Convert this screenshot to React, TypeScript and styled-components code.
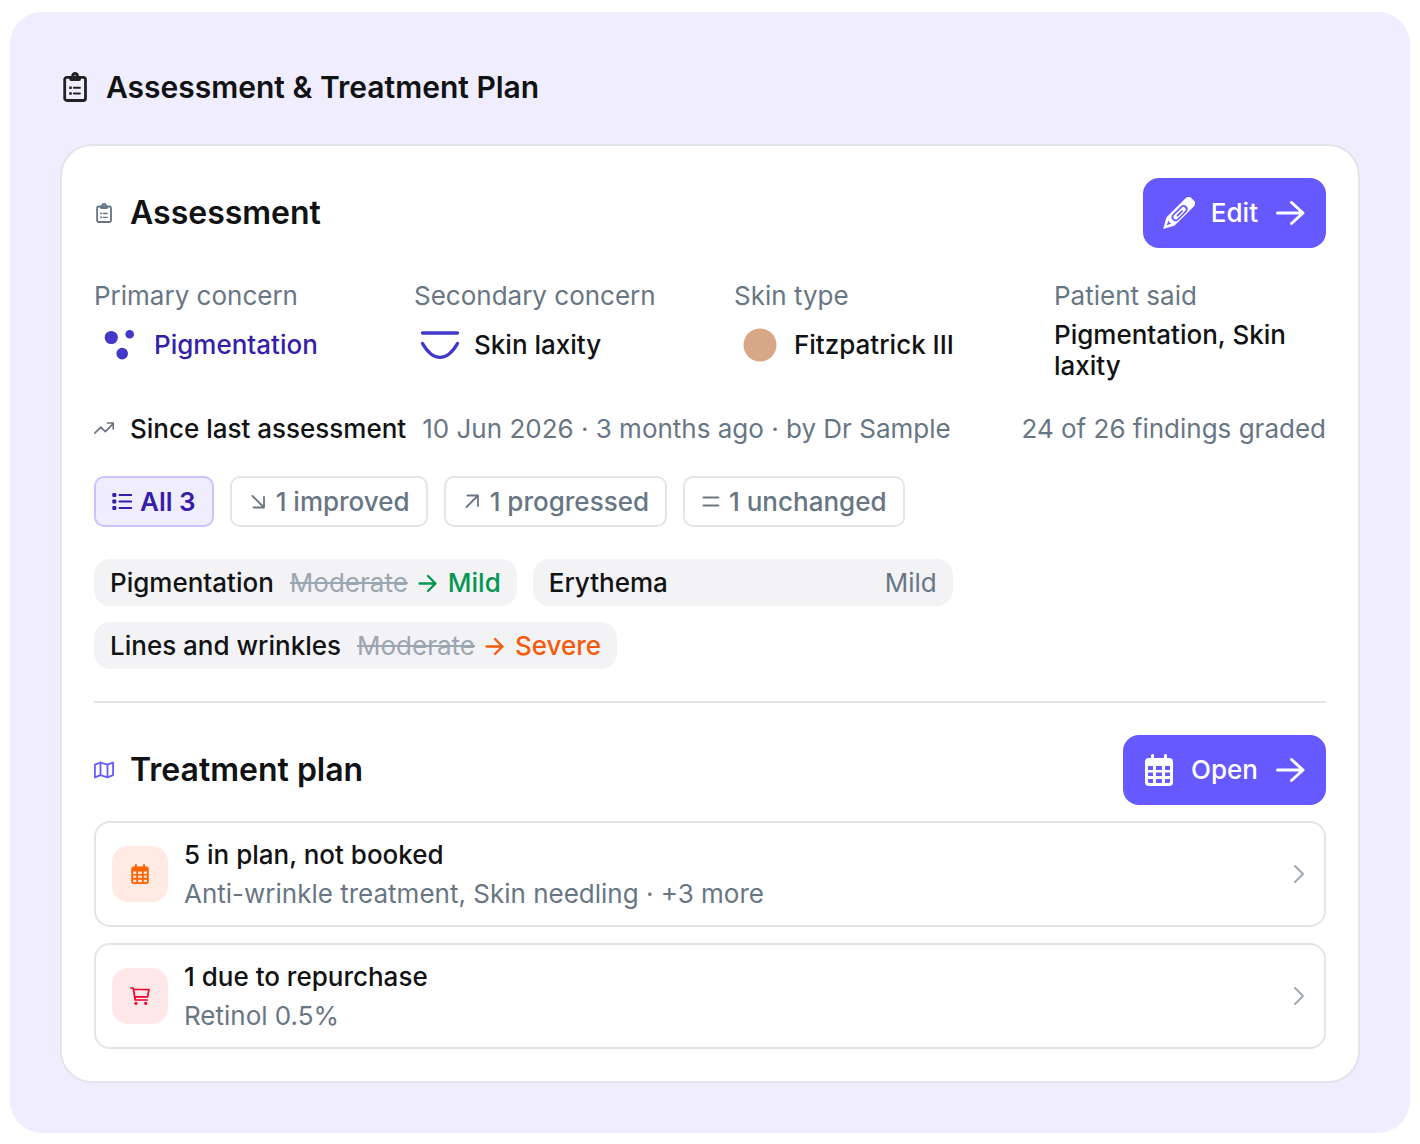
import React from "react";
import styled, { createGlobalStyle } from "styled-components";

const c = {
  panel: "#f0edff",
  primary: "#6559ff",
  text: "#111214",
  muted: "#687684",
  faint: "#9ca6b1",
  border: "#e1e6eb",
  deep: "#351eaa",
  glyph: "#4338ca",
  tag: "#f3f3f6",
  green: "#059652",
  orange: "#f65a0b",
};

const GlobalStyle = createGlobalStyle`
  * { box-sizing: border-box; }
  body {
    margin: 0;
    background: #fff;
    color: ${c.text};
    font: 400 26px/39px Inter, "Liberation Sans", sans-serif;
  }
  h1, h2, h3, p, dl, dd { margin: 0; padding: 0; }
  button { font: inherit; color: inherit; cursor: pointer; }
`;

const Page = styled.main`
  padding: 12px 10px;
`;
const Panel = styled.section`
  padding: 50px;
  border-radius: 32px;
  background: ${c.panel};
`;
const PanelHeader = styled.header`
  display: flex;
  align-items: center;
  gap: 16px;
  height: 50px;
  margin-bottom: 32px;
`;
const PanelTitle = styled.h1`
  font-size: 30px;
  font-weight: 600;
`;
const Card = styled.div`
  padding: 32px;
  border: 2px solid ${c.border};
  border-radius: 32px;
  background: #fff;
`;
const SectionHeader = styled.div`
  display: flex;
  align-items: center;
  justify-content: space-between;
`;
const TitleGroup = styled.div`
  display: flex;
  align-items: center;
  gap: 16px;
`;
const SectionTitle = styled.h2`
  font-size: 32px;
  line-height: 38px;
  font-weight: 600;
`;
const ActionButton = styled.button`
  display: flex;
  align-items: center;
  gap: 16px;
  height: 70px;
  padding: 0 20px;
  border: 0;
  border-radius: 16px;
  background: ${c.primary};
  color: #fff;
  line-height: 38px;
  font-weight: 500;
`;
const Facts = styled.dl`
  display: grid;
  grid-template-columns: repeat(4, 1fr);
  column-gap: 48px;
  margin-top: 28px;
`;
const FactLabel = styled.dt`
  margin-bottom: 4px;
  color: ${c.muted};
`;
const FactValue = styled.dd<{ $color?: string; $multiline?: boolean }>`
  display: flex;
  align-items: center;
  gap: 8px;
  line-height: ${(p) => (p.$multiline ? 31 : 38)}px;
  font-weight: 500;
  color: ${(p) => p.$color ?? c.text};
`;
const Since = styled.div`
  display: flex;
  align-items: center;
  gap: 16px;
  margin-top: 28px;
  color: ${c.muted};
`;
const SinceTitle = styled.h3`
  font-size: 26px;
  font-weight: 500;
  color: ${c.text};
`;
const Graded = styled.p`
  margin-left: auto;
`;
const Wrap = styled.div<{ $top: number }>`
  display: flex;
  flex-wrap: wrap;
  gap: 16px;
  margin-top: ${(p) => p.$top}px;
`;
const Filter = styled.button<{ $active?: boolean }>`
  display: flex;
  align-items: center;
  gap: 8px;
  padding: 4px 16px;
  border: 2px solid ${(p) => (p.$active ? "#cbc3ff" : c.border)};
  border-radius: 10px;
  background: ${(p) => (p.$active ? c.panel : "#fff")};
  color: ${(p) => (p.$active ? c.deep : c.muted)};
  font-weight: ${(p) => (p.$active ? 600 : 500)};
`;
const Finding = styled.div`
  display: flex;
  align-items: center;
  justify-content: space-between;
  gap: 16px;
  min-width: 420px;
  padding: 4px 16px;
  border-radius: 16px;
  background: ${c.tag};
`;
const FindingName = styled.span`
  font-weight: 500;
`;
const Change = styled.span<{ $color: string }>`
  display: flex;
  align-items: center;
  gap: 10px;
  color: ${(p) => p.$color};
`;
const Before = styled.s`
  color: ${c.faint};
`;
const After = styled.span`
  font-weight: 500;
`;
const Rule = styled.hr`
  height: 2px;
  margin: 32px 0;
  border: 0;
  background: ${c.border};
`;
const PlanItem = styled.button`
  display: flex;
  align-items: center;
  gap: 16px;
  width: 100%;
  margin-top: 16px;
  padding: 12px 16px;
  border: 2px solid ${c.border};
  border-radius: 16px;
  background: #fff;
  text-align: left;
`;
const Tile = styled.span<{ $bg: string; $fg: string }>`
  display: flex;
  align-items: center;
  justify-content: center;
  width: 56px;
  height: 56px;
  border-radius: 16px;
  background: ${(p) => p.$bg};
  color: ${(p) => p.$fg};
`;
const ItemText = styled.span`
  flex: 1;
  display: flex;
  flex-direction: column;
`;
const ItemTitle = styled.span`
  font-weight: 500;
`;
const ItemDetail = styled.span`
  color: ${c.muted};
`;
const Svg = styled.svg<{ $size: number; $color?: string }>`
  flex: none;
  display: block;
  width: ${(p) => p.$size}px;
  height: ${(p) => p.$size}px;
  color: ${(p) => p.$color ?? "inherit"};
`;

type IconProps = { size?: number; color?: string };
const line = {
  fill: "none",
  stroke: "currentColor",
  strokeLinecap: "round",
  strokeLinejoin: "round",
} as const;

const Clipboard = ({ size = 20, color }: IconProps) => (
  <Svg $size={size} $color={color} viewBox="0 0 30 30" aria-hidden>
    <rect x="4.7" y="5.3" width="20.8" height="23.2" rx="2.2" {...line} strokeWidth="2.8" />
    <path
      fill="currentColor"
      fillRule="evenodd"
      d="M9.2 4.2h2A4 4 0 0 1 15.1 0a4 4 0 0 1 3.9 4.2h2V7a2 2 0 0 1-2 2h-7.8a2 2 0 0 1-2-2zM15.1 3.2a1.5 1.5 0 1 0 0 3 1.5 1.5 0 0 0 0-3z"
    />
    <path fill="currentColor" d="M9.2 14.4h2.6V17H9.2zM9.2 20.2h2.6v2.6H9.2z" />
    <path d="M13.9 15.7h6M13.9 21.5h6" {...line} strokeWidth="2" />
  </Svg>
);
const Pencil = () => (
  <Svg $size={32} viewBox="0 0 32 32" aria-hidden>
    <path
      fill="currentColor"
      fillRule="evenodd"
      d="M22.6 1.2a4.2 4.2 0 0 1 5.9 0l2.3 2.3a4.2 4.2 0 0 1 0 5.9L12.4 27.8a5 5 0 0 1-2 1.2L.2 32l2.9-10.4a5 5 0 0 1 1.2-2zM5.6 23.4 3.6 28.2l4.8-1.6-1.8-.8z"
    />
    <g {...line}>
      <path d="m12.6 20.2 8-8" stroke={c.primary} strokeWidth="8" />
      <path d="m12.800 20 7.600-7.600" strokeWidth="4.800" />
      <path d="m14.500 18.600 4.700-4.600" stroke={c.primary} strokeWidth="1.600" />
    </g>
  </Svg>
);
const Arrow = () => (
  <Svg $size={32} viewBox="0 0 32 32" aria-hidden>
    <path d="M3.5 16H29M17.5 5.500 29 16 17.500 26.500" {...line} strokeWidth="3" />
  </Svg>
);
const Calendar = ({ size = 32 }: IconProps) => (
  <Svg $size={size} viewBox="0 0 32 32" aria-hidden>
    <path
      fill="currentColor"
      fillRule="evenodd"
      d="M9.500 0A1.500 1.500 0 0 1 11 1.500V4h10V1.500a1.500 1.500 0 0 1 3 0V4h2a4 4 0 0 1 4 4v20a4 4 0 0 1-4 4H6a4 4 0 0 1-4-4V8a4 4 0 0 1 4-4h2V1.500A1.500 1.500 0 0 1 9.500 0zM5 12v4h5v-4zm8 0v4h6v-4zm9 0v4h5v-4zM5 18.500v3.500h5v-3.500zm8 0v3.500h6v-3.500zm9 0v3.500h5v-3.500zM5 25v3l1 1h4v-4zm8 0v4h6v-4zm9 0v4h4l1-1v-3z"
    />
  </Svg>
);
const Spots = () => (
  <Svg $size={52} $color={c.glyph} viewBox="0 0 52 52" aria-hidden>
    <g fill="currentColor">
      <circle cx="17.300" cy="18.500" r="6.600" />
      <circle cx="35.700" cy="15.200" r="4.300" />
      <circle cx="28.200" cy="34.600" r="5.800" />
    </g>
  </Svg>
);
const Laxity = () => (
  <Svg $size={52} $color={c.glyph} viewBox="0 0 52 52" aria-hidden>
    <path d="M8.500 14h35M8.500 24.500C19 43 33 43 43.500 24.500" {...line} strokeWidth="3.400" />
  </Svg>
);
const SkinTone = () => (
  <Svg $size={52} $color="#d6a887" viewBox="0 0 52 52" aria-hidden>
    <circle cx="26" cy="26" r="16.500" fill="currentColor" />
  </Svg>
);
const Trend = () => (
  <Svg $size={20} viewBox="0 0 20 20" aria-hidden>
    <path d="m.8 14.200 6-6 4.500 4.500 7.900-8M13.500 4h5.800v6" {...line} strokeWidth="1.700" />
  </Svg>
);
const List = () => (
  <Svg $size={20} viewBox="0 0 20 20" aria-hidden>
    <g fill="currentColor">
      <rect x="0.300" y="1" width="4" height="4" rx="1" />
      <rect x="0.300" y="7.500" width="4" height="4" rx="1" />
      <rect x="0.300" y="14" width="4" height="4" rx="1" />
    </g>
    <path d="M7.500 3h11.700M7.500 9.500h11.700M7.500 16h11.700" {...line} strokeWidth="2" />
  </Svg>
);
const DownRight = () => (
  <Svg $size={20} viewBox="0 0 20 20" aria-hidden>
    <path d="m4.500 4 11 11M5.500 15.500H16V5" {...line} strokeWidth="1.800" />
  </Svg>
);
const UpRight = () => (
  <Svg $size={20} viewBox="0 0 20 20" aria-hidden>
    <path d="M4.500 15 15.500 4M5.500 3.500H16V14" {...line} strokeWidth="1.800" />
  </Svg>
);
const Equal = () => (
  <Svg $size={20} viewBox="0 0 20 20" aria-hidden>
    <path d="M2.500 5.500h15M2.500 13.500h15" {...line} strokeWidth="1.800" />
  </Svg>
);
const SmallArrow = () => (
  <Svg $size={20} viewBox="0 0 20 20" aria-hidden>
    <path d="M1.500 10.500h16M10 3l7.500 7.500L10 18" {...line} strokeWidth="2.300" />
  </Svg>
);
const MapIcon = () => (
  <Svg $size={20} $color={c.primary} viewBox="0 0 20 20" aria-hidden>
    <path
      d="M.9 4.600 6.500 2.500l7 2.200 5.600-2.200v12.600l-5.600 2.200-7-2.200-5.600 2.200zM6.500 2.500v12.600M13.500 4.700v12.600"
      {...line}
      strokeWidth="1.800"
    />
  </Svg>
);
const Cart = () => (
  <Svg $size={20} viewBox="0 0 20 20" aria-hidden>
    <path d="M.9 2h2.300l2 12h12M3.600 3.500h15.300l-1.300 7.300H4.800" {...line} strokeWidth="1.700" />
    <circle cx="5.900" cy="17.300" r="1.600" fill="currentColor" />
    <circle cx="15.700" cy="17.300" r="1.600" fill="currentColor" />
  </Svg>
);
const Chevron = () => (
  <Svg $size={20} $color={c.faint} viewBox="0 0 20 20" aria-hidden>
    <path d="m7 2 8 8-8 8" {...line} strokeWidth="1.900" />
  </Svg>
);

const filters = [
  { label: "All 3", icon: <List />, active: true },
  { label: "1 improved", icon: <DownRight /> },
  { label: "1 progressed", icon: <UpRight /> },
  { label: "1 unchanged", icon: <Equal /> },
];

const findings = [
  { name: "Pigmentation", before: "Moderate", after: "Mild", color: c.green },
  { name: "Erythema", after: "Mild", color: c.muted },
  { name: "Lines and wrinkles", before: "Moderate", after: "Severe", color: c.orange },
];

export default function App() {
  return (
    <>
      <GlobalStyle />
      <Page>
        <Panel>
          <PanelHeader>
            <Clipboard size={30} color="#222225" />
            <PanelTitle>Assessment &amp; Treatment Plan</PanelTitle>
          </PanelHeader>
          <Card>
            <SectionHeader>
              <TitleGroup>
                <Clipboard color={c.muted} />
                <SectionTitle>Assessment</SectionTitle>
              </TitleGroup>
              <ActionButton type="button">
                <Pencil />
                Edit
                <Arrow />
              </ActionButton>
            </SectionHeader>

            <Facts>
              <div>
                <FactLabel>Primary concern</FactLabel>
                <FactValue $color={c.deep}>
                  <Spots />
                  Pigmentation
                </FactValue>
              </div>
              <div>
                <FactLabel>Secondary concern</FactLabel>
                <FactValue>
                  <Laxity />
                  Skin laxity
                </FactValue>
              </div>
              <div>
                <FactLabel>Skin type</FactLabel>
                <FactValue>
                  <SkinTone />
                  Fitzpatrick III
                </FactValue>
              </div>
              <div>
                <FactLabel>Patient said</FactLabel>
                <FactValue $multiline>Pigmentation, Skin laxity</FactValue>
              </div>
            </Facts>

            <Since>
              <Trend />
              <SinceTitle>Since last assessment</SinceTitle>
              <p>10 Jun 2026 · 3 months ago · by Dr Sample</p>
              <Graded>24 of 26 findings graded</Graded>
            </Since>

            <Wrap $top={28}>
              {filters.map((f) => (
                <Filter key={f.label} type="button" $active={f.active} aria-pressed={!!f.active}>
                  {f.icon}
                  {f.label}
                </Filter>
              ))}
            </Wrap>

            <Wrap $top={32}>
              {findings.map((f) => (
                <Finding key={f.name}>
                  <FindingName>{f.name}</FindingName>
                  <Change $color={f.color}>
                    {f.before ? (
                      <>
                        <Before>{f.before}</Before>
                        <SmallArrow />
                        <After>{f.after}</After>
                      </>
                    ) : (
                      f.after
                    )}
                  </Change>
                </Finding>
              ))}
            </Wrap>

            <Rule />

            <SectionHeader>
              <TitleGroup>
                <MapIcon />
                <SectionTitle>Treatment plan</SectionTitle>
              </TitleGroup>
              <ActionButton type="button">
                <Calendar />
                Open
                <Arrow />
              </ActionButton>
            </SectionHeader>

            <PlanItem type="button">
              <Tile $bg="#ffebe4" $fg="#ff6200">
                <Calendar size={20} />
              </Tile>
              <ItemText>
                <ItemTitle>5 in plan, not booked</ItemTitle>
                <ItemDetail>Anti-wrinkle treatment, Skin needling · +3 more</ItemDetail>
              </ItemText>
              <Chevron />
            </PlanItem>
            <PlanItem type="button">
              <Tile $bg="#ffe8e8" $fg="#f0002f">
                <Cart />
              </Tile>
              <ItemText>
                <ItemTitle>1 due to repurchase</ItemTitle>
                <ItemDetail>Retinol 0.5%</ItemDetail>
              </ItemText>
              <Chevron />
            </PlanItem>
          </Card>
        </Panel>
      </Page>
    </>
  );
}
